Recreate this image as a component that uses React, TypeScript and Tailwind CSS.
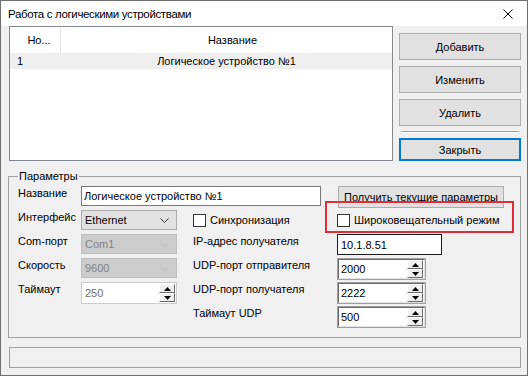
import React from "react";

function Chevron({ color }: { color: string }) {
  return (
    <svg width="9" height="5" viewBox="0 0 9 5" className="shrink-0">
      <path d="M0.5 0.5 L4.5 4.5 L8.5 0.5" fill="none" stroke={color} strokeWidth="1" />
    </svg>
  );
}

function Combo({ value, disabled }: { value: string; disabled?: boolean }) {
  return (
    <div
      className={
        disabled
          ? "flex h-[20px] w-[96px] items-center justify-between border border-[#bfbfbf] bg-[#cccccc] pl-[3px] pr-[7px] text-[#838383]"
          : "flex h-[20px] w-[96px] items-center justify-between border border-[#adadad] bg-[#e1e1e1] pl-[3px] pr-[7px] text-black"
      }
    >
      <span>{value}</span>
      <Chevron color={disabled ? "#bfbfbf" : "#333333"} />
    </div>
  );
}

function Arrow({ up }: { up?: boolean }) {
  return (
    <svg width="7" height="4" viewBox="0 0 7 4">
      <path d={up ? "M0 4 L3.5 0 L7 4 Z" : "M0 0 L3.5 4 L7 0 Z"} fill="#000" />
    </svg>
  );
}

function SpinButtons() {
  return (
    <div className="flex w-[16px] flex-col self-center">
      <div className="flex h-[9px] items-center justify-center border border-t-white border-l-white border-b-[#696969] border-r-[#696969] bg-[#f0f0f0]">
        <Arrow up />
      </div>
      <div className="flex h-[9px] items-center justify-center border border-t-white border-l-white border-b-[#696969] border-r-[#696969] bg-[#f0f0f0]">
        <Arrow />
      </div>
    </div>
  );
}

function Spin({ value }: { value: string }) {
  return (
    <div className="h-[22px] w-[89px] border border-[#a0a0a0]">
      <div className="flex h-full items-center border border-t-[#696969] border-l-[#696969] border-b-[#e3e3e3] border-r-[#e3e3e3] bg-white pl-[2px] pr-[1px]">
        <span className="flex-1">{value}</span>
        <SpinButtons />
      </div>
    </div>
  );
}

function CheckBox({ label }: { label: string }) {
  return (
    <div className="flex items-center">
      <div className="h-[13px] w-[13px] border border-[#333333] bg-white" />
      <span className="ml-[4px]">{label}</span>
    </div>
  );
}

function Button({ label, primary }: { label: string; primary?: boolean }) {
  return (
    <div
      className={
        primary
          ? "flex h-[23px] items-center justify-center border-2 border-[#0078d7] bg-[#e1e1e1]"
          : "flex h-[27px] items-center justify-center border border-[#adadad] bg-[#e1e1e1]"
      }
    >
      {label}
    </div>
  );
}

export default function App() {
  return (
    <div className="relative flex h-[376px] w-[528px] flex-col border border-[#707070] bg-[#f0f0f0] font-['Liberation_Sans',Arial,sans-serif] text-[11px] leading-[14px] text-black">
      {/* заголовок */}
      <div className="flex h-[25px] shrink-0 items-center justify-between bg-white pl-[7px] pr-[14px]">
        <span className="text-[11.5px] tracking-[-0.35px]">Работа с логическими устройствами</span>
        <svg width="10" height="10" viewBox="0 0 10 10">
          <path d="M0.5 0.5 L9.5 9.5 M9.5 0.5 L0.5 9.5" stroke="#000" strokeWidth="1" />
        </svg>
      </div>

      {/* список и кнопки */}
      <div className="flex h-[135px] shrink-0 pl-[8px]">
        <div className="h-full w-[384px] border border-[#828790] bg-white">
          <div className="flex h-[26px]">
            <div className="flex w-[51px] items-center justify-center border-r border-[#e5e5e5] pl-[8px]">Но...</div>
            <div className="flex flex-1 items-center justify-center pl-[12px]">Название</div>
          </div>
          <div className="flex h-[16px] items-center bg-[#efefef]">
            <span className="w-[51px] pl-[7px]">1</span>
            <span className="flex-1 text-center">Логическое устройство №1</span>
          </div>
        </div>
        <div className="ml-[6px] flex w-[122px] flex-col pt-[7px]">
          <Button label="Добавить" />
          <div className="h-[6px]" />
          <Button label="Изменить" />
          <div className="h-[6px]" />
          <Button label="Удалить" />
          <div className="mx-[2px] mt-[5px] h-[2px] border-t border-b border-t-[#a0a0a0] border-b-white" />
          <div className="h-[5px]" />
          <Button label="Закрыть" primary />
        </div>
      </div>

      {/* параметры */}
      <fieldset className="ml-[7px] mt-[8px] h-[169px] w-[513px] shrink-0 border border-[#a0a0a0] pl-[9px] pt-[3px]">
        <legend className="px-[1px]">Параметры</legend>
        <div className="flex h-[24px]">
          <span className="w-[63px]">Название</span>
          <div className="flex h-[20px] w-[240px] items-center border border-[#7a7a7a] bg-white pl-[2px]">
            Логическое устройство №1
          </div>
          <div className="ml-[17px] flex h-[22px] w-[166px] items-center justify-center whitespace-nowrap border border-[#adadad] bg-[#e1e1e1]">
            Получить текущие параметры
          </div>
        </div>
        <div className="flex h-[24px]">
          <span className="w-[63px]">Интерфейс</span>
          <Combo value="Ethernet" />
          <div className="ml-[16px] flex h-[20px] w-[144px] items-center">
            <CheckBox label="Синхронизация" />
          </div>
          <div className="flex h-[20px] items-center">
            <CheckBox label="Широковещательный режим" />
          </div>
        </div>
        <div className="flex h-[24px]">
          <span className="w-[63px]">Com-порт</span>
          <Combo value="Com1" disabled />
          <span className="ml-[16px] w-[144px]">IP-адрес получателя</span>
          <div className="flex h-[21px] w-[105px] items-center border border-[#1e1e1e] bg-white pl-[3px]">10.1.8.51</div>
        </div>
        <div className="flex h-[24px]">
          <span className="w-[63px]">Скорость</span>
          <Combo value="9600" disabled />
          <span className="ml-[16px] w-[144px]">UDP-порт отправителя</span>
          <Spin value="2000" />
        </div>
        <div className="flex h-[24px]">
          <span className="w-[63px]">Таймаут</span>
          <div className="flex h-[22px] w-[96px] items-center border border-[#cccccc] bg-white pl-[3px] pr-[1px] text-[#6d6d6d]">
            <span className="flex-1">250</span>
            <SpinButtons />
          </div>
          <span className="ml-[16px] w-[144px]">UDP-порт получателя</span>
          <Spin value="2222" />
        </div>
        <div className="flex h-[24px]">
          <span className="ml-[175px] w-[144px]">Таймаут UDP</span>
          <Spin value="500" />
        </div>
      </fieldset>

      {/* строка состояния */}
      <div className="ml-[8px] mt-[9px] h-[21px] w-[512px] shrink-0 border border-[#a0a0a0]" />

      {/* выделение */}
      <div className="absolute left-[324px] top-[200px] h-[32px] w-[189px] border-2 border-[#dc2f3a]" />
    </div>
  );
}
